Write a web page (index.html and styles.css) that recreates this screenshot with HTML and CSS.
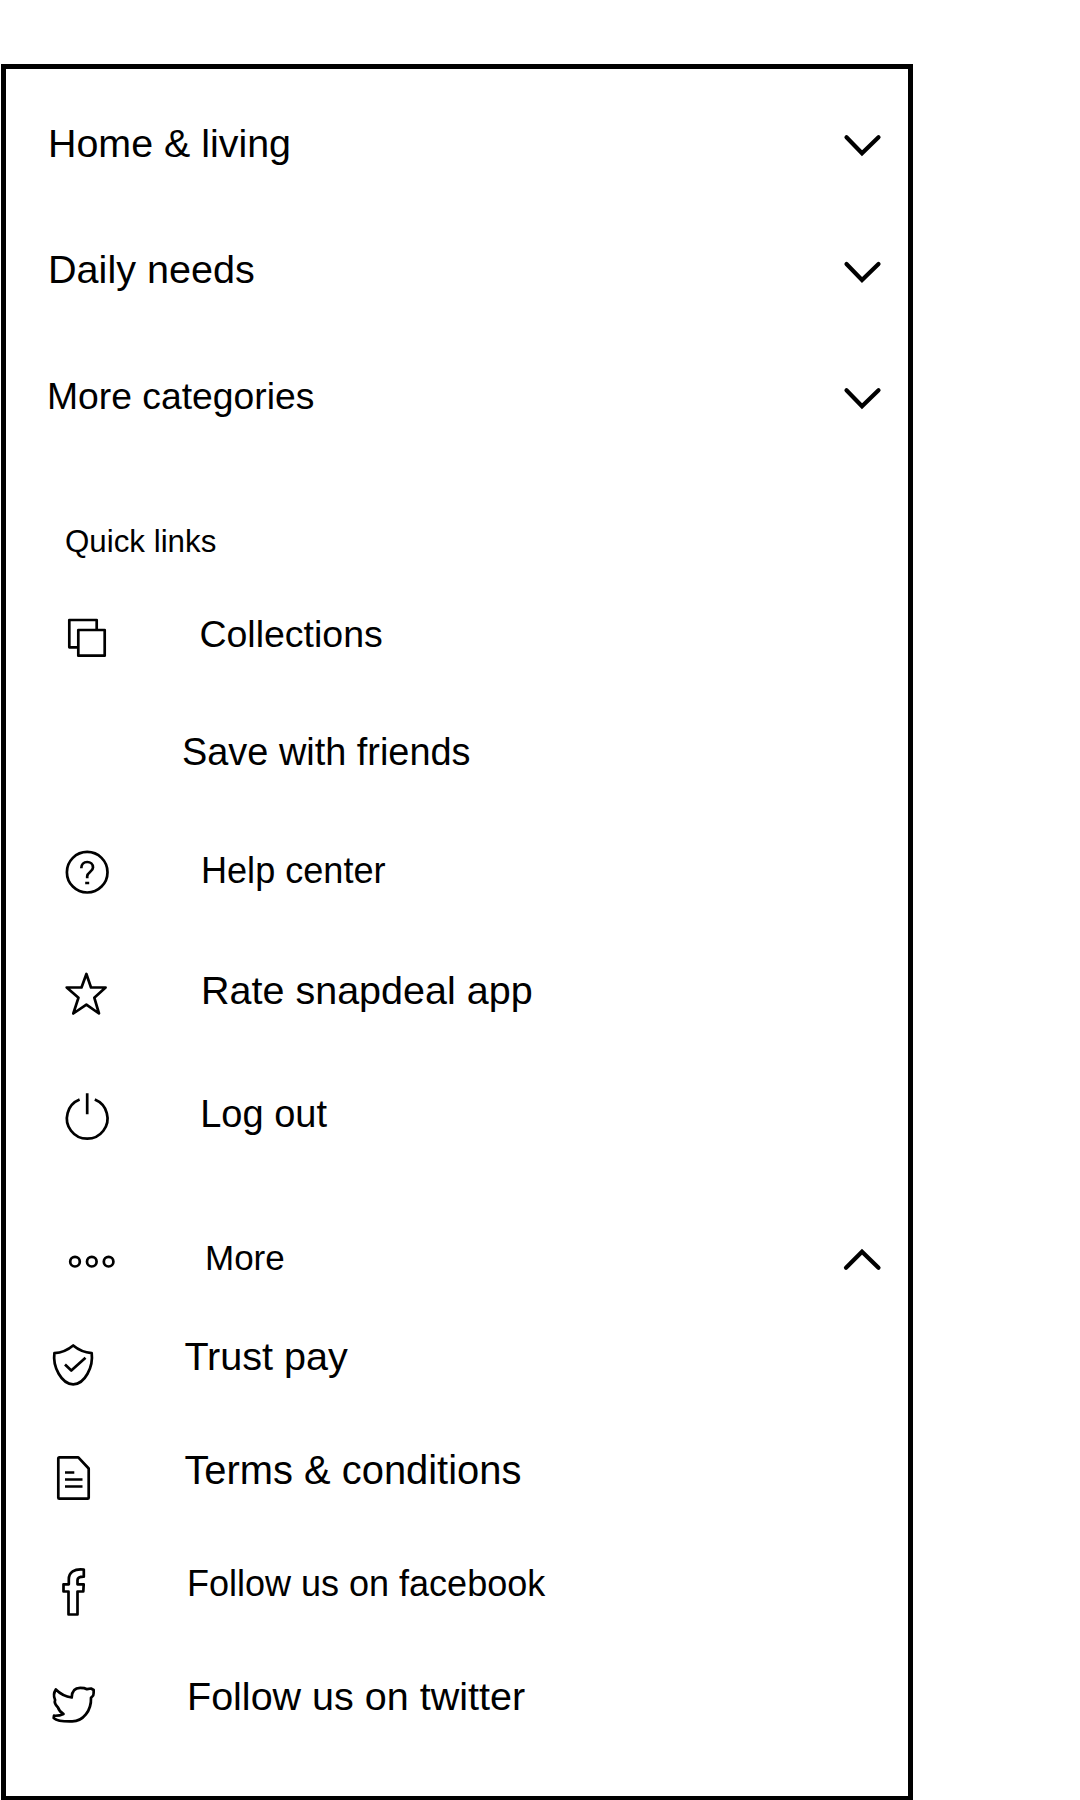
FILE: index.html
```html
<!DOCTYPE html>
<html lang="en">
<head>
<meta charset="utf-8">
<title>Menu</title>
<link rel="stylesheet" href="styles.css">
</head>
<body>
<nav class="menu">
  <section class="categories">
    <div class="row category home"><span class="label">Home &amp; living</span><svg class="chevron" viewBox="0 0 40 40"><path d="M4.500 14.200 20 30.200 36.500 14.200"/></svg></div>
    <div class="row category daily"><span class="label">Daily needs</span><svg class="chevron" viewBox="0 0 40 40"><path d="M4.500 14 20 30 36.500 14"/></svg></div>
    <div class="row category categories-more"><span class="label">More categories</span><svg class="chevron" viewBox="0 0 40 40"><path d="M4.500 14.200 20 30.200 36.500 14.200"/></svg></div>
  </section>
  <h2 class="heading">Quick links</h2>
  <section class="links">
    <div class="row collections">
      <svg class="icon" viewBox="0 0 80 60"><path d="M38.300 43.300h-9V16h27.400v10M38.300 26h26.400v25.700H38.300z"/></svg>
      <span class="label">Collections</span>
    </div>
    <div class="row friends"><span class="label">Save with friends</span></div>
    <div class="row help">
      <svg class="icon" viewBox="0 0 80 60"><circle cx="47.200" cy="32.200" r="20.300"/><path d="M41.300 28.200c0-3.900 2.500-6.200 5.900-6.200 3.300 0 5.800 2.300 5.800 5.500 0 4.300-5.800 4.600-5.800 8.700v2M45.200 43h4"/></svg>
      <span class="label">Help center</span>
    </div>
    <div class="row rate">
      <svg class="icon" viewBox="0 0 80 60"><path d="m46.400 13 4.600 13.500h14.600L54.300 36.700 59 52.500l-12.600-8.800L33.300 52.500l5.200-15.800L26.700 26.500h14.800z"/></svg>
      <span class="label">Rate snapdeal app</span>
    </div>
    <div class="row logout">
      <svg class="icon" viewBox="0 0 80 60"><path d="M39.600 16.600a20.300 20.300 0 1 0 15.200 0M47.200 10.300v21"/></svg>
      <span class="label">Log out</span>
    </div>
    <div class="row more">
      <svg class="icon" viewBox="0 0 80 60"><circle cx="35" cy="34.700" r="4.800"/><circle cx="51.800" cy="34.700" r="4.800"/><circle cx="68.600" cy="34.700" r="4.800"/></svg>
      <span class="label">More</span>
      <svg class="chevron" viewBox="0 0 40 40"><path d="M4 30.700 20 14.700 36.500 30.700"/></svg>
    </div>
    <div class="row trust">
      <svg class="icon" viewBox="0 0 80 60"><path d="M33.200 19.500c-5 4.200-11 7.200-18.800 7.700C12.500 40.500 21.500 58.300 33.200 58.300S53.500 40.500 51.700 27.200C44.500 26.500 38 23.500 33.200 19.500z"/><path d="m25 38.500 6.300 6L45.500 31.700"/></svg>
      <span class="label">Trust pay</span>
    </div>
    <div class="row terms">
      <svg class="icon" viewBox="0 0 80 60"><path d="M19.500 17.300h18.800l10.400 11.200v29.200q0 1-1 1H19.300q-1 0-1-1V18.500q0-1.200 1.200-1.200zM25 32.500h9.300M25 39.500h17.500M25 46.500h17.500"/></svg>
      <span class="label">Terms &amp; conditions</span>
    </div>
    <div class="row facebook">
      <svg class="icon" viewBox="0 0 80 60"><path d="M43.800 16.500v7.200c-4 .1-6.300.8-6.300 3.300v4.300h6.200l-.4 7.200h-5.800V61.500h-9V38.500h-5v-7.200h5.300v-5c0-7 5.500-11 15-9.800z"/></svg>
      <span class="label">Follow us on facebook</span>
    </div>
    <div class="row twitter">
      <svg class="icon" viewBox="0 0 80 60"><path d="M15.800 23.500c4 4 9 7 15.900 8 .2-6 3.300-9.600 8.500-9.600 2.800 0 5 .3 6.800 1.300l4-.7 2.700 1.500-.1 3.500c.3 2.200-1.500 3.200-2.600 4.200.5 13-8 23.700-18.800 23.700-6 0-14 .5-18.500-3.500l.3-2.200c3.500.2 6.500-.3 9.500-1.700-3-1.500-4.500-3.500-5.500-6.500-3-3-3.700-5.500-2.900-7.500-1.800-4-1.600-7 .7-10.500z"/></svg>
      <span class="label">Follow us on twitter</span>
    </div>
  </section>
</nav>
</body>
</html>
```
FILE: styles.css
```css
* { box-sizing: border-box; }
body {
  margin: 0;
  padding: 64px 0 0 1px;
  background: #fff;
  color: #000;
  font-family: "Liberation Sans", Arial, sans-serif;
}
.menu {
  width: 912px;
  height: 1736px;
  padding-top: 11px;
  border: 5px solid #000;
  border-bottom-width: 4px;
}
.row {
  display: flex;
  align-items: center;
  padding: 0 26px 0 34px;
}
.label { line-height: 48px; white-space: nowrap; }
.icon, .chevron {
  flex: none;
  fill: none;
  stroke: #000;
  overflow: visible;
}
.icon { width: 80px; height: 60px; stroke-width: 2.7; stroke-linejoin: round; }
.chevron {
  width: 40px;
  height: 40px;
  margin-left: auto;
  stroke-width: 4.2;
  stroke-linecap: round;
}
.category { height: 126px; }
.home .label { margin-left: 8px; font-size: 39.4px; }
.daily { height: 127px; }
.daily .label { margin-left: 8px; padding-bottom: 2px; font-size: 39.6px; }
.categories-more .label { margin-left: 7px; font-size: 37.3px; }
.heading {
  margin: 53px 0 4px 59px;
  font-size: 31.3px;
  font-weight: 400;
  line-height: 60px;
}
.collections { height: 116px; }
.collections .label { margin-left: 79.400px; font-size: 37.5px; }
.friends { height: 118px; }
.friends .label { margin-left: 142px; padding-top: 1px; font-size: 37.9px; }
.help { height: 120px; }
.help .label { margin-left: 81px; padding-top: 1px; font-size: 36.1px; }
.rate { height: 122px; }
.rate .label { margin-left: 81px; padding-bottom: 2px; font-size: 39.5px; }
.logout { height: 122px; }
.logout .label { margin-left: 80.200px; padding-top: 1px; font-size: 38px; }
.more { height: 102px; margin-top: 32px; }
.more .label { margin-left: 85px; padding-top: 2px; font-size: 35px; }
.trust { height: 96px; }
.trust .label { margin-left: 64.400px; font-size: 39.600px; }
.terms { height: 114px; margin-top: 9px; }
.terms .label { margin-left: 64.400px; padding-bottom: 1px; font-size: 39.9px; }
.facebook { height: 112px; }
.facebook .label { margin-left: 67px; padding-top: 1px; font-size: 36px; }
.twitter { height: 114px; }
.twitter .label { margin-left: 67px; font-size: 39.5px; }
```
